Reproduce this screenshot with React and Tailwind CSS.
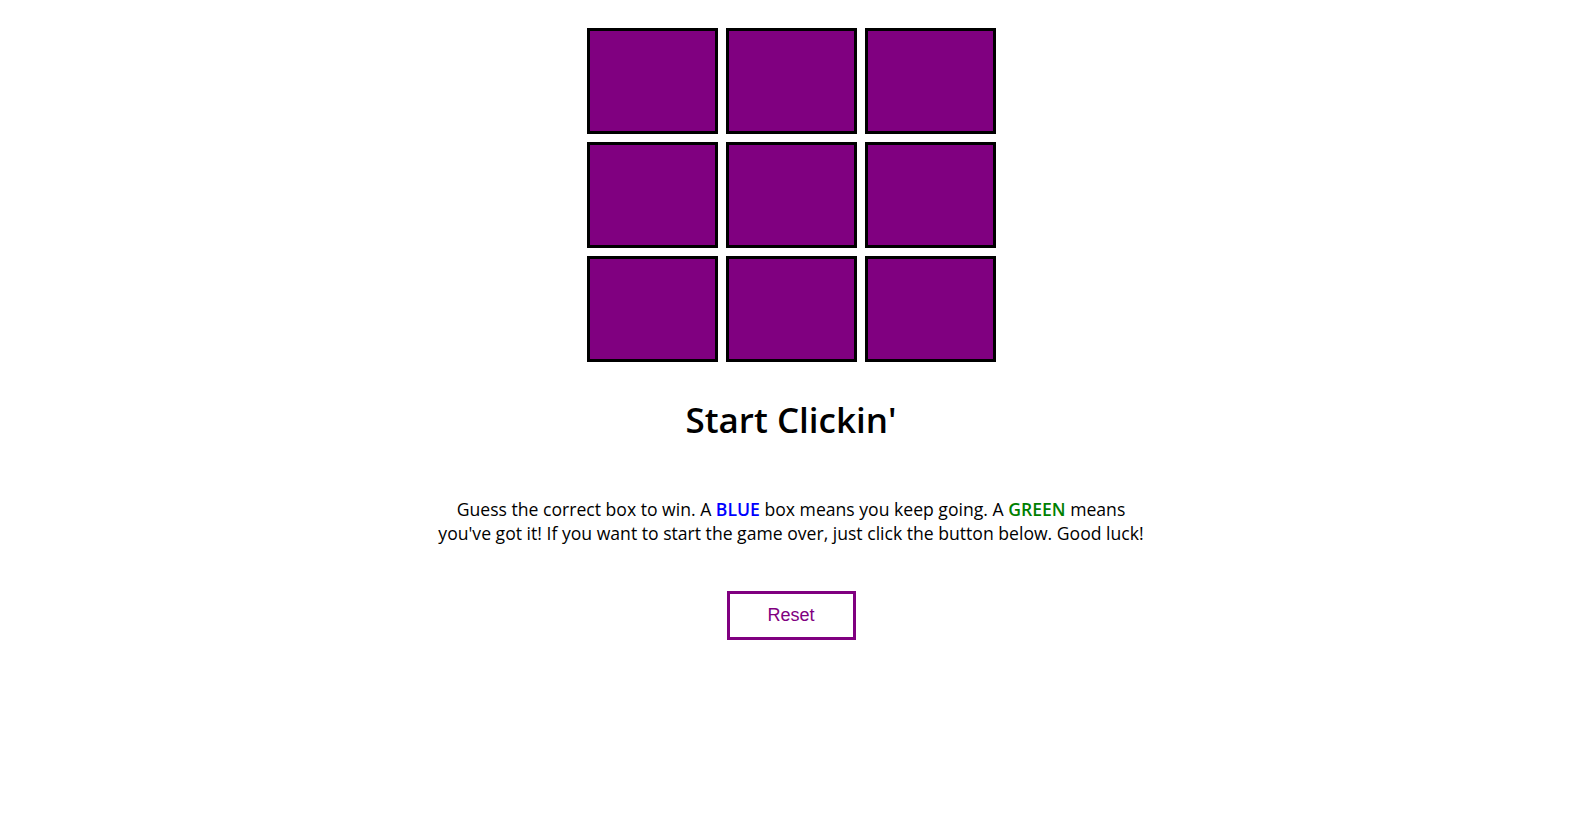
export default function App() {
  const boxes = Array.from({ length: 9 });
  return (
    <div className="min-h-[828px] bg-white flex flex-col items-center pt-[24px] pr-[2px]">
      <div className="grid grid-cols-3 w-[417px]">
        {boxes.map((_, i) => (
          <div
            key={i}
            className="m-[4px] w-[131px] h-[106px] border-[3px] border-black bg-[#800080] box-border"
          />
        ))}
      </div>
      <h1 className="mt-[34px] text-[35px] leading-[40px] font-semibold text-black font-['Open_Sans',sans-serif]">
        Start Clickin'
      </h1>
      <p className="mt-[57px] max-w-[720px] text-center text-[17.6px] leading-[24px] text-black font-['Open_Sans',sans-serif]">
        Guess the correct box to win. A <span className="font-semibold text-[#0000ff]">BLUE</span> box means you keep going. A{" "}
        <span className="font-semibold text-[#008000]">GREEN</span> means you've got it! If you want to start the game over, just click the button below. Good luck!
      </p>
      <button className="mt-[46px] w-[129px] h-[49px] border-[3px] border-[#800080] bg-white text-[#800080] text-[18px] font-['Liberation_Sans',Arial,sans-serif]">
        Reset
      </button>
    </div>
  );
}
